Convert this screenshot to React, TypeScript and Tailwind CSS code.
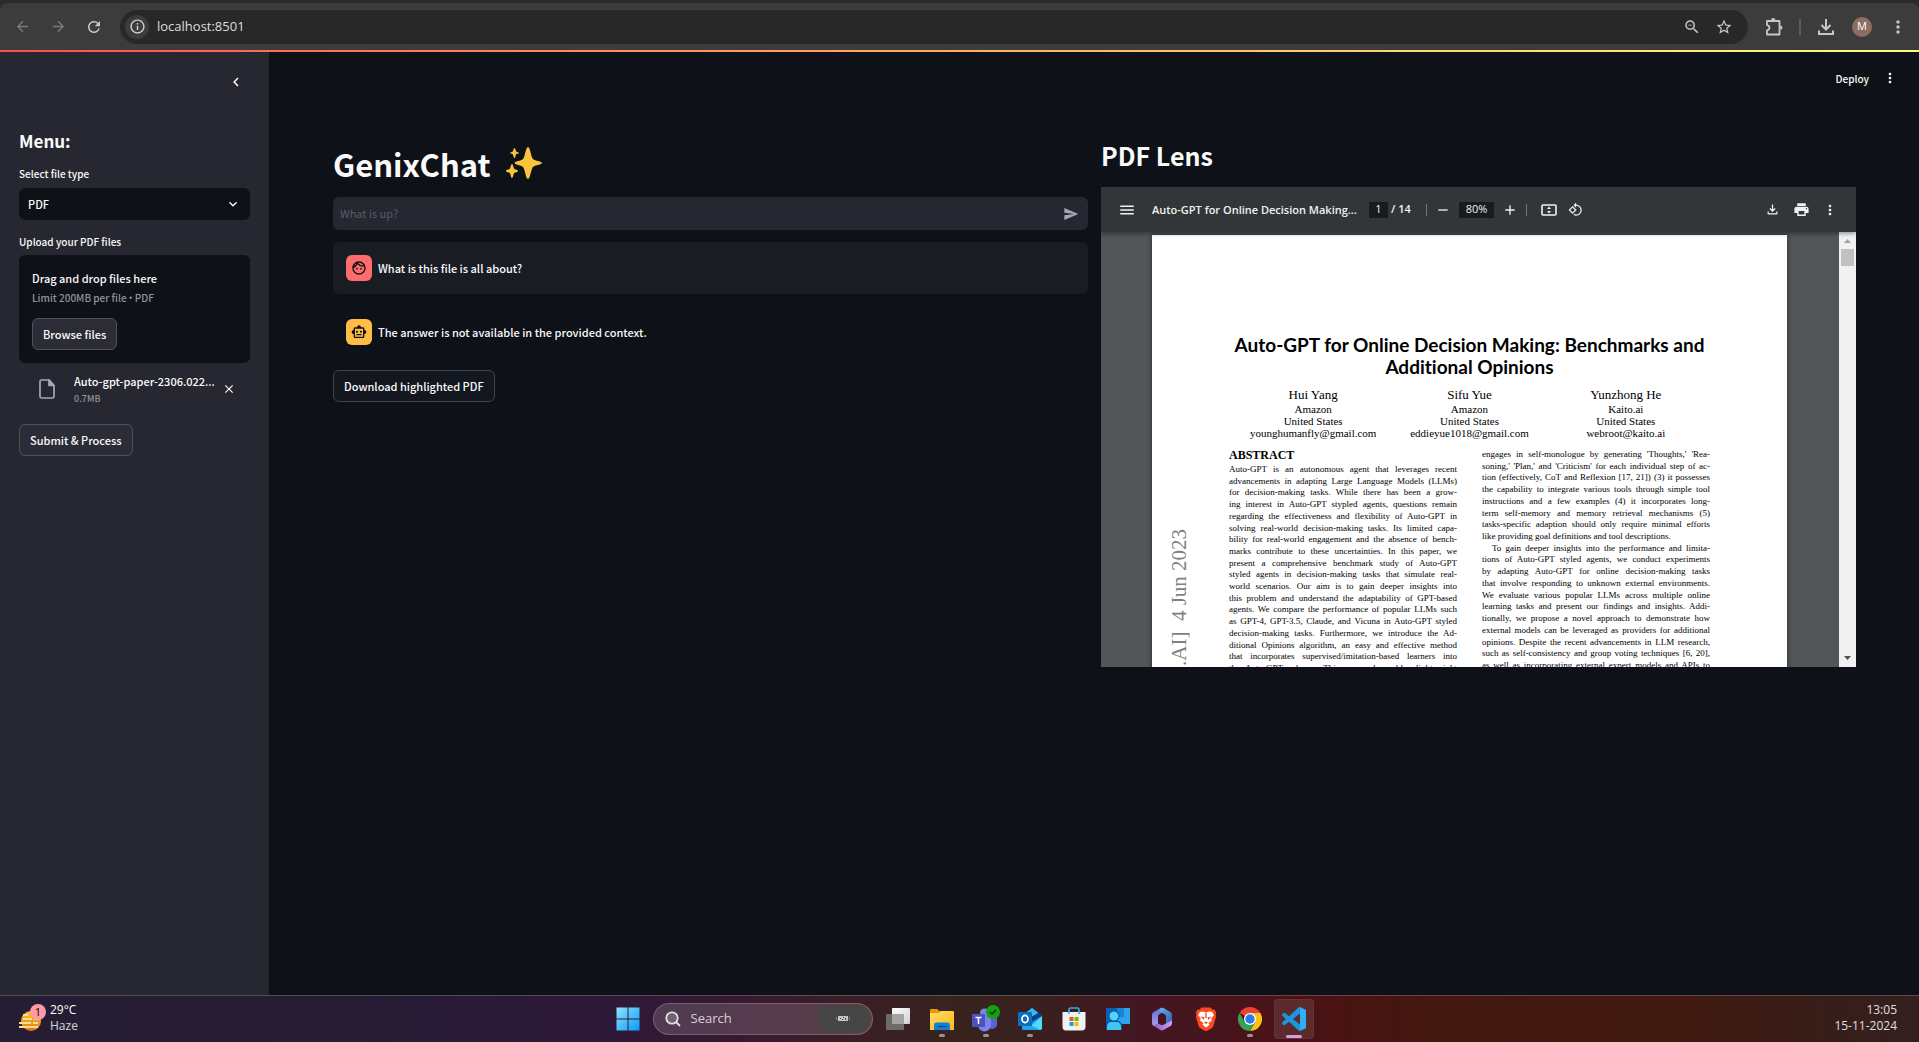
import React from "react";
import {
  MdAdd,
  MdArrowBack,
  MdArrowForward,
  MdChevronLeft,
  MdClose,
  MdExpandMore,
  MdMenu,
  MdMoreVert,
  MdOutlineFace,
  MdOutlineFileDownload,
  MdOutlineInfo,
  MdOutlineSmartToy,
  MdPrint,
  MdRefresh,
  MdRemove,
  MdRotate90DegreesCcw,
  MdSend,
  MdStarBorder,
  MdZoomOut,
} from "react-icons/md";

const appFont = "font-['Noto_Sans_CJK_SC','Noto_Sans',sans-serif]";
const systemFont = "font-['Open_Sans','Noto_Sans',sans-serif]";

function IconButton({ label, className = "", children }: { label: string; className?: string; children: React.ReactNode }) {
  return (
    <button type="button" aria-label={label} className={`flex shrink-0 items-center justify-center ${className}`}>
      {children}
    </button>
  );
}

/* ---------- Browser bar ---------- */

function ExtensionIcon() {
  return (
    <svg width="18" height="18" viewBox="0 0 18 18" fill="none" stroke="#c7c7c7" strokeWidth="1.800" strokeLinejoin="round">
      <path d="M2 3h12.500v13.500H2v-4.200c1.500-.2 2.400-1.200 2.400-2.500S3.500 7.400 2 7.200z" />
      <path d="M6 2.200a2.200 2.200 0 0 1 4.400 0zM15.300 7.400a2.200 2.200 0 0 1 0 4.400z" fill="#c7c7c7" stroke="none" />
    </svg>
  );
}

function TrayDownloadIcon() {
  return (
    <svg width="18" height="18" viewBox="0 0 18 18" fill="none" stroke="#c7c7c7" strokeWidth="2">
      <path d="M9 1v10M4.500 7 9 11.500 13.500 7M2 12.500V16h14v-3.500" />
    </svg>
  );
}

function BrowserBar() {
  return (
    <header className={`shrink-0 bg-[#2b2b2b] pt-[3px] ${systemFont}`}>
      <div className="flex h-[47px] items-center rounded-t-lg bg-[#3c3c3c] pr-[3px] pl-1">
        <IconButton label="Back" className="w-9 text-[#7b7b7b]"><MdArrowBack size={17} /></IconButton>
        <IconButton label="Forward" className="w-9 text-[#7b7b7b]"><MdArrowForward size={17} /></IconButton>
        <IconButton label="Reload" className="w-9 text-[#c7c7c7]"><MdRefresh size={18} /></IconButton>
        <div className="ml-2 flex h-[34px] flex-1 items-center rounded-full bg-[#282828] pr-2 pl-[5px]">
          <IconButton label="Site information" className="size-6 rounded-full bg-[#3c3c3c] text-[#d0d0d0]"><MdOutlineInfo size={17} /></IconButton>
          <input aria-label="Address" defaultValue="localhost:8501" className="mx-2 min-w-0 flex-1 bg-transparent text-[13px] text-[#dedede] outline-none" />
          <IconButton label="Zoom" className="w-8 text-[#c7c7c7]"><MdZoomOut size={18} /></IconButton>
          <IconButton label="Bookmark" className="w-8 text-[#c7c7c7]"><MdStarBorder size={18} /></IconButton>
        </div>
        <IconButton label="Extensions" className="ml-2 w-9"><ExtensionIcon /></IconButton>
        <span className="mx-[7px] h-4 w-[2px] bg-[#5b5b5b]" />
        <IconButton label="Downloads" className="w-9"><TrayDownloadIcon /></IconButton>
        <IconButton label="Profile" className="w-9">
          <span className="flex size-5 items-center justify-center rounded-full bg-[#8d6e63] text-[11px] text-white">M</span>
        </IconButton>
        <IconButton label="Browser menu" className="w-9 text-[#c7c7c7]"><MdMoreVert size={20} /></IconButton>
      </div>
      <div className="h-[2px] bg-linear-to-r from-[#ff4b4b] to-[#fffd80]" />
    </header>
  );
}

/* ---------- Sidebar ---------- */

function FileIcon() {
  return (
    <svg width="16" height="20" viewBox="0 0 16 20" fill="none" stroke="#a3a8b8" strokeWidth="1.700" strokeLinejoin="round">
      <path d="M2.500 1H10l5 5.500v11c0 .8-.7 1.500-1.500 1.500h-11C1.700 19 1 18.300 1 17.500v-15C1 1.700 1.700 1 2.500 1z" />
      <path d="M10 1v5.500h5z" fill="#a3a8b8" />
    </svg>
  );
}

function Sidebar() {
  return (
    <aside className="flex w-[269px] shrink-0 flex-col bg-[#262730] pr-[19px] pl-[19px] text-[#fafafa]">
      <div className="flex h-[60px] items-center justify-end pr-1">
        <IconButton label="Collapse sidebar" className="size-5"><MdChevronLeft size={18} /></IconButton>
      </div>
      <h2 className="mt-[17px] text-[17px] leading-6 font-bold">Menu:</h2>
      <label htmlFor="file-type" className="mt-[13px] text-[10px] leading-4 font-medium">Select file type</label>
      <div className="relative mt-1.5">
        <select id="file-type" className="h-8 w-full appearance-none rounded-md bg-[#0e1117] pl-[9px] text-[11px] font-medium outline-none">
          <option>PDF</option>
        </select>
        <MdExpandMore size={16} className="pointer-events-none absolute top-2 right-[9px]" />
      </div>
      <span className="mt-3.5 text-[10px] leading-4 font-medium">Upload your PDF files</span>
      <section aria-label="File upload" className="mt-[5px] rounded-md bg-[#0e1117] p-[13px]">
        <p className="text-[11px] leading-5 font-medium">Drag and drop files here</p>
        <p className="text-[10px] leading-5 font-medium text-[#92939a]">
          Limit 200MB per file <span className={systemFont}>•</span> PDF
        </p>
        <button type="button" className="mt-2.5 h-8 rounded-md border border-[#50515a] bg-[#2b2c36] px-2.5 text-[11px] font-medium">Browse files</button>
      </section>
      <div className="mt-2 flex items-center pr-3 pl-5">
        <FileIcon />
        <div className="ml-[19px] w-[146px] shrink-0">
          <p className="text-[11px] leading-5 font-medium whitespace-nowrap">Auto-gpt-paper-2306.022...</p>
          <p className="text-[9px] leading-4 font-medium text-[#92939a]">0.7MB</p>
        </div>
        <IconButton label="Remove file" className="ml-0.5 size-3.5"><MdClose size={14} /></IconButton>
      </div>
      <button type="button" className="mt-[17px] h-8 self-start rounded-md border border-[#50515a] bg-[#2b2c36] px-2.5 text-[11px] font-medium">Submit &amp; Process</button>
    </aside>
  );
}

/* ---------- Chat ---------- */

function Sparkles() {
  return (
    <svg width="36" height="32" viewBox="0 0 36 32" fill="#f9c33c" aria-hidden="true">
      <path d="M22 0c2.200 0 3 10 5 12s9 2.200 9 4-7 2-9 4-2.800 12-5 12-3-10-5-12-8.500-2.200-8.500-4 6.500-2 8.500-4S19.800 0 22 0z" />
      <path d="M8.500 1c1 0 1.100 2.800 1.800 3.500S13 5 13 6 10.900 6.500 10.200 7.200 9.500 11 8.500 11 7.400 8 6.700 7.200 4 7 4 6s2-.8 2.700-1.500S7.500 1 8.500 1z" />
      <path d="M6 17c1.200 0 1.400 4 2.200 4.800S12 22.800 12 24s-3 1.300-3.800 2.100S7.200 31 6 31s-1.400-4.100-2.200-4.900S0 25.200 0 24s3-1.400 3.800-2.200S4.800 17 6 17z" />
    </svg>
  );
}

function Message({ text, fromUser }: { text: string; fromUser?: boolean }) {
  return (
    <article className={`flex h-[52px] items-center rounded-md px-[13px] ${fromUser ? "bg-[#1a1c24]" : ""}`}>
      <span className={`flex size-[26px] items-center justify-center rounded-md text-[#0e1117] ${fromUser ? "bg-[#ff6c6c]" : "bg-[#ffbd45]"}`}>
        {fromUser ? <MdOutlineFace size={16} /> : <MdOutlineSmartToy size={16} />}
      </span>
      <p className="ml-1.5 text-[11px] leading-5 font-medium">{text}</p>
    </article>
  );
}

function Chat() {
  return (
    <section className="flex min-w-0 flex-1 flex-col">
      <h1 className="mt-1.5 flex h-[50px] items-center gap-[15px] text-[31px] leading-none font-bold">
        GenixChat <Sparkles />
      </h1>
      <form className="mt-[9px] flex h-[33px] items-center rounded-md bg-[#262730] pr-[9px] pl-[7px]">
        <input aria-label="Message" placeholder="What is up?" className="min-w-0 flex-1 bg-transparent text-[11px] outline-none placeholder:text-[#5a5c68]" />
        <IconButton label="Send" className="text-[#a3a8b8]"><MdSend size={16} /></IconButton>
      </form>
      <div className="mt-3 flex flex-col gap-3">
        <Message fromUser text="What is this file is all about?" />
        <Message text="The answer is not available in the provided context." />
      </div>
      <button type="button" className="mt-3 h-8 self-start rounded-md border border-[#41444c] bg-[#131720] px-2.5 text-[11px] font-medium">Download highlighted PDF</button>
    </section>
  );
}

/* ---------- PDF viewer ---------- */

const abstractLines = [
  "Auto-GPT is an autonomous agent that leverages recent",
  "advancements in adapting Large Language Models (LLMs)",
  "for decision-making tasks. While there has been a grow-",
  "ing interest in Auto-GPT stypled agents, questions remain",
  "regarding the effectiveness and flexibility of Auto-GPT in",
  "solving real-world decision-making tasks. Its limited capa-",
  "bility for real-world engagement and the absence of bench-",
  "marks contribute to these uncertainties. In this paper, we",
  "present a comprehensive benchmark study of Auto-GPT",
  "styled agents in decision-making tasks that simulate real-",
  "world scenarios. Our aim is to gain deeper insights into",
  "this problem and understand the adaptability of GPT-based",
  "agents. We compare the performance of popular LLMs such",
  "as GPT-4, GPT-3.5, Claude, and Vicuna in Auto-GPT styled",
  "decision-making tasks. Furthermore, we introduce the Ad-",
  "ditional Opinions algorithm, an easy and effective method",
  "that incorporates supervised/imitation-based learners into",
  "the Auto-GPT scheme. This approach enables lightweight",
];

const introLines = [
  "engages in self-monologue by generating 'Thoughts,' 'Rea-",
  "soning,' 'Plan,' and 'Criticism' for each individual step of ac-",
  "tion (effectively, CoT and Reflexion [17, 21]) (3) it possesses",
  "the capability to integrate various tools through simple tool",
  "instructions and a few examples (4) it incorporates long-",
  "term self-memory and memory retrieval mechanisms (5)",
  "tasks-specific adaption should only require minimal efforts",
  "like providing goal definitions and tool descriptions.",
  "To gain deeper insights into the performance and limita-",
  "tions of Auto-GPT styled agents, we conduct experiments",
  "by adapting Auto-GPT for online decision-making tasks",
  "that involve responding to unknown external environments.",
  "We evaluate various popular LLMs across multiple online",
  "learning tasks and present our findings and insights. Addi-",
  "tionally, we propose a novel approach to demonstrate how",
  "external models can be leveraged as providers for additional",
  "opinions. Despite the recent advancements in LLM research,",
  "such as self-consistency and group voting techniques [6, 20],",
  "as well as incorporating external expert models and APIs to",
];

const authors = [
  ["Hui Yang", "Amazon", "United States", "younghumanfly@gmail.com"],
  ["Sifu Yue", "Amazon", "United States", "eddieyue1018@gmail.com"],
  ["Yunzhong He", "Kaito.ai", "United States", "webroot@kaito.ai"],
];

function Lines({ lines, className }: { lines: string[]; className: string }) {
  return (
    <div className={`flex flex-col justify-between text-[9px] leading-[11px] ${className}`}>
      {lines.map((line) => (
        <p
          key={line}
          className={`whitespace-nowrap ${line.startsWith("To gain") ? "pl-2.5" : ""} ${line.startsWith("like") ? "" : "[text-align-last:justify]"}`}
        >
          {line}
        </p>
      ))}
    </div>
  );
}

function FitPageIcon() {
  return (
    <svg width="16" height="12" viewBox="0 0 16 12" fill="none">
      <rect x="1" y="1" width="14" height="10" rx="1" stroke="#f1f1f1" strokeWidth="1.600" />
      <path d="M8 2.500 10 5H6zM8 9.500 6 7h4z" fill="#f1f1f1" />
    </svg>
  );
}

function PdfToolbar() {
  return (
    <div className={`relative z-10 flex h-[45px] shrink-0 items-center bg-[#323639] pr-[18px] pl-[18px] text-[#f1f1f1] shadow-[0_2px_4px_rgba(0,0,0,0.35)] ${systemFont}`}>
      <IconButton label="Sidebar" className="w-4"><MdMenu size={18} className="shrink-0" /></IconButton>
      <span className="ml-[17px] w-[200px] text-[11px] leading-4 font-semibold whitespace-nowrap">Auto-GPT for Online Decision Making...</span>
      <input aria-label="Page" defaultValue="1" className="ml-[17px] h-4 w-[19px] bg-[#191b1c] text-center text-[11px] outline-none" />
      <span className="ml-[3px] w-6 text-[11px] font-semibold whitespace-nowrap">/ 14</span>
      <span className="ml-[11px] h-3 w-px bg-[#74777a]" />
      <IconButton label="Zoom out" className="ml-2 w-4"><MdRemove size={16} /></IconButton>
      <input aria-label="Zoom level" defaultValue="80%" className="ml-2 h-4 w-[35px] bg-[#191b1c] text-center text-[11px] outline-none" />
      <IconButton label="Zoom in" className="ml-2 w-4"><MdAdd size={16} /></IconButton>
      <span className="ml-2 h-3 w-px bg-[#74777a]" />
      <IconButton label="Fit to page" className="ml-3.5 w-4"><FitPageIcon /></IconButton>
      <IconButton label="Rotate" className="ml-2.5 w-4"><MdRotate90DegreesCcw size={15} /></IconButton>
      <div className="ml-auto flex items-center gap-[13px]">
        <IconButton label="Download" className="w-4"><MdOutlineFileDownload size={15} /></IconButton>
        <IconButton label="Print" className="w-4"><MdPrint size={17} className="shrink-0" /></IconButton>
        <IconButton label="More actions" className="w-4"><MdMoreVert size={16} /></IconButton>
      </div>
    </div>
  );
}

function Paper() {
  return (
    <div className="flex h-[600px] w-[635px] shrink-0 bg-white font-['Liberation_Serif',serif] text-black shadow-[0_0_5px_rgba(0,0,0,0.5)]">
      <div className="mt-[290px] ml-[14px] h-[141px] w-[27px] rotate-180 text-[21px] leading-[27px] whitespace-pre text-[#7f7f7f] [writing-mode:vertical-rl]">.AI]  4 Jun 2023</div>
      <div className="ml-[36px] w-[481px] shrink-0 pt-[99px]">
        <h3 className="text-center font-['Lato','Open_Sans',sans-serif] text-[19px] leading-[22px] font-bold [font-variant-ligatures:none]">
          Auto-GPT for Online Decision Making: Benchmarks and
          <br />
          Additional Opinions
        </h3>
        <div className="mx-[6px] mt-[9px] grid grid-cols-3">
          {authors.map(([name, ...rest]) => (
            <div key={name} className="text-center">
              <p className="text-[13px] leading-4">{name}</p>
              {rest.map((item) => (
                <p key={item} className="text-[11px] leading-3">{item}</p>
              ))}
            </div>
          ))}
        </div>
        <div className="mt-[10px] grid grid-cols-[228px_228px] gap-[25px]">
          <div>
            <h4 className="text-[12px] leading-3 font-bold">ABSTRACT</h4>
            <Lines lines={abstractLines} className="mt-[3px] h-[210px]" />
          </div>
          <Lines lines={introLines} className="h-[222px]" />
        </div>
      </div>
    </div>
  );
}

function PdfLens() {
  return (
    <section className="flex min-w-0 flex-1 flex-col">
      <h2 className="text-[25px] leading-[46px] font-bold">PDF Lens</h2>
      <div className="mt-[9px] flex h-[480px] flex-col overflow-hidden bg-[#525659]">
        <PdfToolbar />
        <div className="flex min-h-0 flex-1 overflow-hidden">
          <div className="flex min-w-0 flex-1 items-start justify-center overflow-hidden pt-[3px] pr-px">
            <Paper />
          </div>
          <div className="flex w-[17px] shrink-0 flex-col items-center bg-[#f1f1f1]">
            <svg width="17" height="17" viewBox="0 0 17 17" fill="#a3a3a3"><path d="M5 11h7L8.500 7z" /></svg>
            <div className="h-[17px] w-[13px] bg-[#c1c1c1]" />
            <svg width="17" height="17" viewBox="0 0 17 17" fill="#505050" className="mt-auto"><path d="M5 6h7l-3.500 4z" /></svg>
          </div>
        </div>
      </div>
    </section>
  );
}

/* ---------- Taskbar ---------- */

function WindowsIcon() {
  return (
    <svg width="24" height="24" viewBox="0 0 24 24">
      <defs>
        <linearGradient id="win" x1="0" y1="0" x2="1" y2="1"><stop stopColor="#8ce4ff" /><stop offset="1" stopColor="#0a9bf5" /></linearGradient>
      </defs>
      <path fill="url(#win)" d="M.5.500h11v11H.5zM12.500.500h11v11h-11zM.5 12.500h11v11H.5zM12.500 12.500h11v11h-11z" />
    </svg>
  );
}

function TaskViewIcon() {
  return (
    <svg width="24" height="24" viewBox="0 0 24 24">
      <defs>
        <linearGradient id="tv" x1="0" y1="0" x2="1" y2="1"><stop stopColor="#fff" /><stop offset="1" stopColor="#d0d0d0" /></linearGradient>
      </defs>
      <rect x="6" y="1" width="18" height="16" rx="1" fill="url(#tv)" />
      <rect x="0" y="7" width="18" height="16" rx="1" fill="#6b6b6b" />
      <path d="M6 7h12v10H6z" fill="#a4a4a4" />
    </svg>
  );
}

function ExplorerIcon() {
  return (
    <svg width="24" height="24" viewBox="0 0 24 24">
      <defs>
        <linearGradient id="ex" x1="0" y1="0" x2="1" y2="1"><stop stopColor="#ffdc6b" /><stop offset="1" stopColor="#fdb813" /></linearGradient>
      </defs>
      <path d="M0 3c0-.6.400-1 1-1h6l2.500 2H22v4H0z" fill="#e69b06" />
      <path d="M0 6h9l2-2h12c.6 0 1 .4 1 1v18H0z" fill="url(#ex)" />
      <path d="M4 23v-5c0-1.700 1.300-2.500 2.500-2.500h11c1.200 0 2.500.8 2.500 2.500v5z" fill="#0f83d3" />
      <path d="M7 19.500h10" stroke="#0a4c91" strokeWidth="1.200" />
    </svg>
  );
}

function TeamsIcon() {
  return (
    <svg width="30" height="28" viewBox="0 0 30 28">
      <circle cx="13.500" cy="8" r="4.500" fill="#7b83eb" />
      <circle cx="22" cy="10" r="3.500" fill="#5059c9" />
      <path d="M17 13h9v6a5 5 0 0 1-9 3z" fill="#5b62cf" />
      <path d="M7 12h13v8a6.500 6.500 0 0 1-13 0z" fill="#7b83eb" />
      <rect x="1" y="9" width="13" height="13" rx="1" fill="#4b53bc" />
      <path d="M4.500 12.500h6M7.500 12.500v6.500" stroke="#fff" strokeWidth="1.500" />
      <circle cx="22" cy="7" r="7" fill="#13a10e" />
      <path d="m19 7 2 2 4-4" fill="none" stroke="#08320a" strokeWidth="1.500" />
    </svg>
  );
}

function OutlookIcon() {
  return (
    <svg width="24" height="24" viewBox="0 0 24 24">
      <path d="M4 9 14 1l10 8v12c0 1-.8 2-2 2H6c-1 0-2-1-2-2z" fill="#1490df" />
      <path d="M6 7 14 1l6 4.500L11 12z" fill="#35b8f1" />
      <path d="M24 9 13 15l-4-3 12-6z" fill="#0a3f86" />
      <path d="M24 9v12c0 1-.8 2-2 2H8z" fill="#50d9ff" />
      <path d="M4 14v7c0 1 .8 2 2 2h16.500z" fill="#1ea5ec" />
      <rect x="0" y="5" width="14" height="14" rx="1" fill="#0f6cbd" />
      <ellipse cx="7" cy="12" rx="3" ry="3.600" fill="none" stroke="#fff" strokeWidth="1.700" />
    </svg>
  );
}

function StoreIcon() {
  return (
    <svg width="24" height="24" viewBox="0 0 24 24">
      <path d="M7 7V3c0-1 .6-2 1.600-2h6.800c1 0 1.600 1 1.600 2v4" fill="none" stroke="#2bb0ec" strokeWidth="1.600" />
      <path d="M.5 5h23v15c0 2-1.300 3.500-3.500 3.500H4C1.800 23.500.5 22 .5 20z" fill="#f1f1f1" />
      <path d="M6 4h1.700v3H6zM16.300 4H18v3h-1.700z" fill="#2bb0ec" />
      <path d="M7.500 10h4v4h-4z" fill="#f25022" />
      <path d="M12.500 10h4v4h-4z" fill="#7fba00" />
      <path d="M7.500 15h4v4h-4z" fill="#00a4ef" />
      <path d="M12.500 15h4v4h-4z" fill="#ffb900" />
    </svg>
  );
}

function PeopleIcon() {
  return (
    <svg width="24" height="24" viewBox="0 0 24 24">
      <path d="M0 1h14v17H0z" fill="#0b5fb4" />
      <path d="M11 1h13v16H11z" fill="#2aa3ea" />
      <path d="M11 1h7v9h-7z" fill="#1783d4" />
      <circle cx="8" cy="9" r="5.500" fill="#0b4f9c" />
      <circle cx="8" cy="9" r="4.500" fill="#50d5f8" />
      <path d="M0 23v-4c0-3 2-5 5-5h6c3 0 5 2 5 5v4z" fill="#0b4f9c" />
      <path d="M1 23v-3.500C1 17 2.800 15 5 15h6c2.200 0 4 2 4 4.500V23z" fill="#3cc8f4" />
    </svg>
  );
}

function CopilotIcon() {
  return (
    <svg width="24" height="24" viewBox="0 0 24 24">
      <defs>
        <linearGradient id="m365a" x1="0" y1="0" x2="0" y2="1"><stop stopColor="#5a6fd0" /><stop offset="1" stopColor="#b79cf0" /></linearGradient>
        <linearGradient id="m365b" x1="0" y1="0" x2="1" y2="1"><stop stopColor="#5fb4f2" /><stop offset="1" stopColor="#3a55b5" /></linearGradient>
        <linearGradient id="m365c" x1="0" y1="0" x2="1" y2="0"><stop stopColor="#8561cf" /><stop offset="1" stopColor="#d0a0f0" /></linearGradient>
      </defs>
      <path d="M10.500 1 4 4.700C2.700 5.500 2 6.700 2 8v8c0 1.300.7 2.500 1.800 3.100L8 16.500V9.500c0-1 .5-1.800 1.300-2.300L15 4z" fill="url(#m365a)" />
      <path d="M10.500 1c1-.5 2-.5 3 0L20 4.700c1.200.7 2 2 2 3.300v8c0 1.300-.7 2.500-2 3.300l-4-2.800V9.500c0-1-.5-1.800-1.300-2.300L9 4z" fill="url(#m365b)" />
      <path d="M3.800 19.100 10.500 23c1 .5 2 .5 3 0L20 19.300c1.200-.7 2-2 2-3.300v-2.500l-8.700 4.200c-.8.400-1.800.4-2.600 0L8 16.300z" fill="url(#m365c)" />
    </svg>
  );
}

function BraveIcon() {
  return (
    <svg width="24" height="24" viewBox="0 0 24 24">
      <path d="M7.500.500h9l2 2.300 2-.3 1.700 3-.7 2 .6 2-2.600 9.300c-.4 1.200-1 1.700-2 2.400L12 24.500l-5.500-3.300c-1-.7-1.600-1.200-2-2.400L1.900 9.500l.6-2-.7-2 1.700-3 2 .3z" fill="#fb4a1f" />
      <path d="M12 5.500 8.500 4.600 6 5 4 8l2.700 3.200-.6 2.300 3.500 2.700-1.100 1.500L12 20.500l3.500-2.800-1.100-1.500 3.500-2.700-.6-2.300L20 8l-2-3-2.500-.4z" fill="#fff" />
      <path d="m6.500 9.500 4 .8-.6 2.700zM17.500 9.500l-4 .8.600 2.700zM12 14.500l2 1-2 1.500-2-1.500zM11.300 6h1.400v5h-1.400z" fill="#fb4a1f" />
    </svg>
  );
}

function ChromeIcon() {
  return (
    <svg width="24" height="24" viewBox="0 0 24 24">
      <path d="M12 12 1.600 6a12 12 0 0 1 20.800 0z" fill="#e94235" />
      <path d="M12 6h10.400A12 12 0 0 1 12 24l5.200-9z" fill="#fbc116" />
      <path d="M6.800 15 1.600 6A12 12 0 0 0 12 24l5.200-9z" fill="#34a353" />
      <circle cx="12" cy="12" r="6" fill="#fff" />
      <circle cx="12" cy="12" r="4.700" fill="#2f7bee" />
    </svg>
  );
}

function VsCodeIcon() {
  return (
    <svg width="24" height="24" viewBox="0 0 24 24">
      <path
        fill="#1c95e0"
        d="M23.150 2.587L18.210.210a1.494 1.494 0 0 0-1.705.290l-9.460 8.630-4.120-3.128a.999.999 0 0 0-1.276.057L.327 7.261A1 1 0 0 0 .326 8.740L3.899 12 .326 15.260a1 1 0 0 0 .001 1.479L1.650 17.940a.999.999 0 0 0 1.276.057l4.120-3.128 9.460 8.630a1.492 1.492 0 0 0 1.704.290l4.942-2.377A1.500 1.500 0 0 0 24 20.060V3.939a1.500 1.500 0 0 0-.850-1.352zm-5.146 14.861L10.826 12l7.178-5.448v10.896z"
      />
      <path d="M18 .3 23.150 2.587A1.500 1.500 0 0 1 24 3.939V20.060a1.500 1.500 0 0 1-.850 1.352L18 23.700z" fill="#2fadf5" />
    </svg>
  );
}

function WeatherIcon() {
  return (
    <svg width="28" height="28" viewBox="0 0 28 28">
      <defs>
        <linearGradient id="sun" x1="0" y1="0" x2="0" y2="1"><stop stopColor="#ffc91f" /><stop offset="1" stopColor="#e8720c" /></linearGradient>
      </defs>
      <circle cx="12" cy="17" r="10" fill="url(#sun)" />
      <path d="M4 11h5M4 15h9M15 15h6M0 19h12M14 19h5M0 23h19" stroke="#f7dfa0" strokeWidth="2" />
      <circle cx="19" cy="8" r="8" fill="#ff99a4" />
    </svg>
  );
}

const tasks = [
  { name: "Task View", icon: <TaskViewIcon />, state: "" },
  { name: "File Explorer", icon: <ExplorerIcon />, state: "open" },
  { name: "Teams", icon: <TeamsIcon />, state: "open" },
  { name: "Outlook", icon: <OutlookIcon />, state: "open" },
  { name: "Store", icon: <StoreIcon />, state: "" },
  { name: "People", icon: <PeopleIcon />, state: "" },
  { name: "Microsoft 365", icon: <CopilotIcon />, state: "" },
  { name: "Brave", icon: <BraveIcon />, state: "" },
  { name: "Chrome", icon: <ChromeIcon />, state: "open" },
  { name: "Visual Studio Code", icon: <VsCodeIcon />, state: "active" },
];

function Taskbar() {
  return (
    <footer
      className={`grid h-[47px] shrink-0 grid-cols-[1fr_auto_1fr] items-center border-t border-white/20 bg-[linear-gradient(90deg,#251d33_0%,#261c34_18%,#2e1938_32%,#3a1a2e_40%,#38231f_49%,#38211e_53%,#431622_60%,#4b1214_68%,#42180f_75%,#40190f_87%,#33201f_100%)] text-[12px] text-white/90 ${systemFont}`}
    >
      <button type="button" className="flex items-center justify-self-start pb-0.5 pl-[19px] text-left">
        <span className="relative">
          <WeatherIcon />
          <span className="absolute top-0 right-[1px] w-4 text-center text-[11px] leading-4 text-black">1</span>
        </span>
        <span className="ml-[3px] leading-4">
          <span className="block text-white">29°C</span>
          <span className="block text-white/80">Haze</span>
        </span>
      </button>
      <div className="flex items-center pb-px pl-0.5">
        <IconButton label="Start" className="w-11"><WindowsIcon /></IconButton>
        <div className="mx-[3px] flex h-8 w-[220px] items-center rounded-full border border-white/20 bg-white/15 pr-[3px] pl-[11px]">
          <svg width="16" height="16" viewBox="0 0 16 16" fill="none" stroke="#e4dfe3" strokeWidth="1.800">
            <circle cx="7" cy="7" r="5.700" fill="#6f6271" />
            <path d="m11 11 4 4" />
          </svg>
          <input aria-label="Search" placeholder="Search" className="ml-2.5 w-[110px] bg-transparent text-[13px] outline-none placeholder:text-[#d8cfd6]" />
          <span className="ml-auto flex h-[26px] w-[52px] items-center justify-center rounded-full bg-[#454545]">
            <svg width="14" height="5" viewBox="0 0 14 5"><path d="M0 1h1v3H0zM13 1h1v3h-1z" fill="#4a9aa6" /><path d="M2 0h10v5H2z" fill="#c4c4c4" /><path d="M4 2h1v1H4zM6 3h1v1H6zM7 1h1v1H7zM9 2h1v2H9z" fill="#454545" /></svg>
          </span>
        </div>
        {tasks.map((task) => (
          <div key={task.name} className="flex w-11 shrink-0 justify-center">
            <button
              type="button"
              aria-label={task.name}
              className={`relative flex size-10 items-center justify-center rounded-[4px] ${task.state === "active" ? "border border-white/5 bg-white/10" : ""}`}
            >
              {task.icon}
              {task.state === "open" && <span className="absolute bottom-0.5 h-[3px] w-1.5 rounded-full bg-[#9c9292]" />}
              {task.state === "active" && <span className="absolute bottom-0 h-[3px] w-4 rounded-full bg-[#d99be6]" />}
            </button>
          </div>
        ))}
      </div>
      <time className="justify-self-end pr-[22px] pb-0.5 text-right leading-4 text-white/85">
        <span className="block">13:05</span>
        <span className="block">15-11-2024</span>
      </time>
    </footer>
  );
}

export default function App() {
  return (
    <div className={`flex h-screen flex-col overflow-hidden bg-[#0e1117] text-[#fafafa] ${appFont}`}>
      <BrowserBar />
      <div className="flex min-h-0 flex-1">
        <Sidebar />
        <main className="flex min-w-0 flex-1 flex-col">
          <div className="flex h-[52px] items-center justify-end gap-[13px] pr-[21px]">
            <button type="button" className="text-[10px] font-medium">Deploy</button>
            <IconButton label="App menu" className="w-4"><MdMoreVert size={16} /></IconButton>
          </div>
          <div className="mt-7 flex items-start gap-[13px] pr-[63px] pl-16">
            <Chat />
            <PdfLens />
          </div>
        </main>
      </div>
      <Taskbar />
    </div>
  );
}
